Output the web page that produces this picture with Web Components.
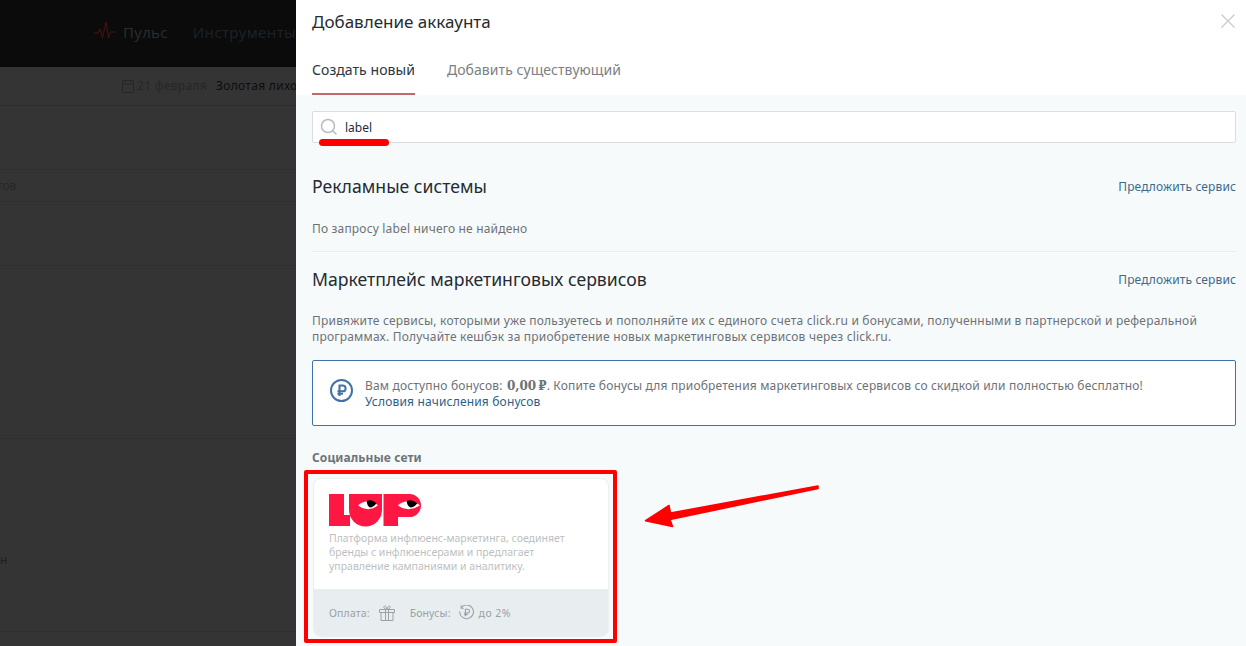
<!DOCTYPE html>
<html lang="ru"><head><meta charset="utf-8"><title>Добавление аккаунта</title>
<style>
html,body{margin:0;padding:0;height:646px;overflow:hidden;background:#343434}
body{font-family:"Noto Sans","Open Sans",sans-serif}
</style></head><body>
<app-shell>
  <page-behind slot="page"></page-behind>
  <account-drawer slot="drawer"></account-drawer>
  <mark-up></mark-up>
</app-shell>
<script>
function el(name, css, html){
  customElements.define(name, class extends HTMLElement{
    constructor(){super();this.attachShadow({mode:'open'}).innerHTML='<style>'+css+'</style>'+html;}
  });
}
el('app-shell',`:host{display:flex;position:relative;width:1246px;height:646px;overflow:hidden}`,
`<slot name="page"></slot><slot name="drawer"></slot><slot></slot>`);

el('page-behind',`
:host{display:flex;flex-direction:column;width:296px;height:646px;flex:none;overflow:hidden;background:#343434;font-family:"Noto Sans",sans-serif;font-size:12px;color:#262626}
.top{height:67px;flex:none;background:#0b0b0b;display:flex;align-items:center;padding:0 0 3px 94px;box-sizing:border-box;gap:6px;white-space:nowrap;font-family:"Open Sans",sans-serif;font-size:15px;letter-spacing:.35px}
.top span{color:#2e2e2e}.top span+span{margin-left:19px;color:#1c232b}
.top svg{flex:none;margin-top:-2px}
.date{height:39px;flex:none;display:flex;align-items:center;padding:0 0 1px 122px;box-sizing:border-box;white-space:nowrap;border-bottom:1px solid #2f2f2f;letter-spacing:.3px}
.date svg{margin-right:3px;flex:none}.date b{font-weight:400;color:#262626;margin-right:9px}.date i{font-style:normal;color:#0d0d0d}
.r{flex:none;border-bottom:1px solid #2e2e2e;box-sizing:border-box;display:flex;align-items:center;white-space:nowrap}
.cut{margin-left:-3px}
`,`
<div class="top"><svg width="23" height="22" viewBox="0 0 23 22" fill="none" stroke="#4a1216" stroke-width="1"><path d="M0 13h4l2-4 2.500 9L12 2l2.500 16 2-6h5"/></svg><span>Пульс</span><span>Инструменты</span></div>
<div class="date"><svg width="12" height="14" viewBox="0 0 12 14" fill="none" stroke="#262626"><rect x=".5" y="1.500" width="11" height="12" rx="1"/><path d="M.5 5h11M3 0v3M9 0v3"/></svg><b>21 февраля</b><i>Золотая лихо</i></div>
<div class="r" style="height:64px"></div>
<div class="r" style="height:32px;color:#262626"><span class="cut">тов</span></div>
<div class="r" style="height:64px"></div>
<div class="r" style="height:173px"></div>
<div class="r" style="height:193px;align-items:flex-start;padding-top:112px;color:#1f1f1f">н</div>
`);

el('search-field',`
:host{display:flex;align-items:center;height:32px;box-sizing:border-box;background:#fff;border:1px solid #d8dfe3;border-radius:2px;padding-left:7px;font-size:12px;color:#1d2a3a}
svg{margin-right:7px;flex:none}`,
`<svg width="18" height="18" viewBox="0 0 18 18" fill="none" stroke="#b9bcbf" stroke-width="1.500"><circle cx="8" cy="8" r="6.500"/><path d="M12.700 12.700l3.800 3.800"/></svg><span><slot></slot></span>`);

el('section-head',`
:host{display:flex;justify-content:space-between;align-items:center;font-size:17.650px;color:#262b30}
a{font-size:12px;color:#3d6a8b;text-decoration:none;letter-spacing:.12px}`,
`<span><slot></slot></span><a>Предложить сервис</a>`);

el('bonus-note',`
:host{display:flex;align-items:center;height:66px;box-sizing:border-box;background:#fff;border:1px solid #3f72ad;border-radius:2px;padding:2px 0 0 16px;font-size:12px;line-height:16px;color:#6d7276;letter-spacing:.17px}
svg{flex:none;margin:-8px 11px 0 0}
b{font-family:"DejaVu Serif",serif;font-size:12px;color:#6d7276;letter-spacing:0;margin-left:1px;word-spacing:-2px}
a{color:#2e5f86;text-decoration:none}`,
`<svg width="25" height="25" viewBox="0 0 25 25" fill="none" stroke="#4071a8"><circle cx="12.500" cy="12.500" r="10.500" stroke-width="2"/><path d="M10.500 18V7.500h3.200a2.900 2.900 0 0 1 0 5.800H8.500M8.500 15.800h5.500" stroke-width="2"/></svg>
<div>Вам доступно бонусов: <b>0,00 ₽</b>. Копите бонусы для приобретения маркетинговых сервисов со скидкой или полностью бесплатно!<br><a>Условия начисления бонусов</a></div>`);

el('service-card',`
:host{display:flex;flex-direction:column;width:296px;height:159px;box-sizing:border-box;background:#fff;border:1px solid #e8eef1;border-radius:8px;overflow:hidden;font-size:10.500px;line-height:14px;color:#bcbfc1}
.m{flex:1;padding:15px 15px 0}
svg.logo{display:block;margin-bottom:4px}
.f{height:47px;flex:none;background:#e8eef0;display:flex;align-items:center;padding-left:15px;color:#9aa1a5;gap:9px;box-sizing:border-box;letter-spacing:.12px}
.f span.b{margin-left:6px}.f svg{flex:none}.f svg.rb{margin:0 -4px 0 -1px}.f span.p{letter-spacing:.45px}`,
`<div class="m"><svg class="logo" width="93" height="33" viewBox="0 0 93 33">
<path fill="#ff1744" d="M0 0H15V21H21V32H0Z"/>
<path fill="#ff1744" d="M20 0H53V16A16.500 16.500 0 0 1 20 16Z"/>
<path fill="#ff1744" d="M54.500 0H80.500A11.500 11.500 0 0 1 80.500 23H69V32H54.500Z"/>
<path fill="#fff" d="M29 11.300Q39 3 49 11.300Q39 19 29 11.300Z"/><path fill="#000" d="M37.700 7Q43 5 47.500 9.200Q44 13.500 41 13.500Q38 12 37.700 7Z"/>
<path fill="#fff" d="M68.700 11.300Q79 3 91 11.300Q79 19 68.700 11.300Z"/><path fill="#000" d="M77.700 7Q83 5 88.300 9.200Q85 13.500 81.500 13.500Q78 12 77.700 7Z"/>
</svg>Платформа инфлюенс-маркетинга, соединяет<br>бренды с инфлюенсерами и предлагает<br>управление кампаниями и аналитику.</div>
<div class="f"><span>Оплата:</span><svg width="16" height="16" viewBox="0 0 16 16" fill="none" stroke="#9aa1a5"><path d="M.5 4.500h15v3H.5zM2 7.500v8h12v-8M6.500 4.500v11M9.500 4.500v11M8 4.500C6 4.500 4.500 3 5 1.500S7.500 1.500 8 4.500C8.500 1.500 10.500 0 11 1.500S10 4.500 8 4.500z"/></svg><span class="b">Бонусы:</span><svg class="rb" width="15" height="15" viewBox="0 0 14 14" fill="none" stroke="#9aa1a5"><path d="M2 2.500A6.400 6.400 0 1 1 .7 6M2 .5v2.500h2.500"/><path d="M6 10.500V4h2a1.700 1.700 0 0 1 0 3.600H4.800M4.800 9h3.200"/></svg><span class="p">до 2%</span></div>`);

el('account-drawer',`
:host{display:flex;flex-direction:column;width:950px;height:646px;flex:none;background:#f6fafb;overflow:hidden;font-family:"Noto Sans",sans-serif}
.head{height:95px;flex:none;box-sizing:border-box;background:#fff;padding:0 10px 0 16px;display:flex;flex-direction:column}
.title{height:42px;display:flex;align-items:center;font-size:17px;color:#262b30;justify-content:space-between;flex:none}
.tabs{display:flex;gap:32px;flex:1;font-size:14px;letter-spacing:.06px}
.tab{padding-top:18px;color:#7b8085;box-sizing:border-box;height:53px}
.tab.on{color:#2b3640;border-bottom:2px solid #c7666d}
.body{padding:16px 10px 0 16px;display:flex;flex-direction:column}
.msg{font-size:12px;color:#6d7276;margin-top:22px;padding-bottom:14px;border-bottom:1px solid #e9edef;line-height:16px;letter-spacing:.17px}
.text{font-size:12px;color:#6d7276;line-height:16px;margin:21px 0 15px;letter-spacing:.2px}
.soc{font-size:12px;font-weight:700;color:#6f7479;margin:24px 0 12px;line-height:16px;letter-spacing:.1px}
.card{padding-left:1px}
`,`
<div class="head"><div class="title"><span>Добавление аккаунта</span><svg width="16" height="16" viewBox="0 0 16 16" stroke="#c8cace" fill="none" stroke-width="1.200"><path d="M1.500 1.500l13 13M14.500 1.500l-13 13"/></svg></div>
<div class="tabs"><div class="tab on">Создать новый</div><div class="tab">Добавить существующий</div></div></div>
<div class="body">
<search-field>label</search-field>
<section-head style="margin-top:30px;height:26px">Рекламные системы</section-head>
<div class="msg">По запросу label ничего не найдено</div>
<section-head style="margin-top:14px;height:26px">Маркетплейс маркетинговых сервисов</section-head>
<div class="text">Привяжите сервисы, которыми уже пользуетесь и пополняйте их с единого счета click.ru и бонусами, полученными в партнерской и реферальной программах. Получайте кешбэк за приобретение новых маркетинговых сервисов через click.ru.</div>
<bonus-note></bonus-note>
<div class="soc">Социальные сети</div>
<div class="card"><service-card></service-card></div>
</div>`);

el('mark-up',`
:host{position:absolute;inset:0;pointer-events:none;display:block}
.u{position:absolute;left:319px;top:139px;width:70px;height:7px;border-radius:4px;background:#fe0000}
.r{position:absolute;left:304px;top:470px;width:313px;height:173px;box-sizing:border-box;border:4px solid #fe0000;border-radius:2px}
svg{position:absolute;left:640px;top:480px}`,
`<div class="u"></div><div class="r"></div><svg width="182" height="50" viewBox="0 0 182 50"><path fill="#fe0000" stroke="#fe0000" stroke-width="1.500" stroke-linejoin="round" d="M178 6L178 8.500L30 39.500L32.500 46.500L5.500 40.700L29 25.500L30.500 33Z"/></svg>`);
</script>
</body></html>
